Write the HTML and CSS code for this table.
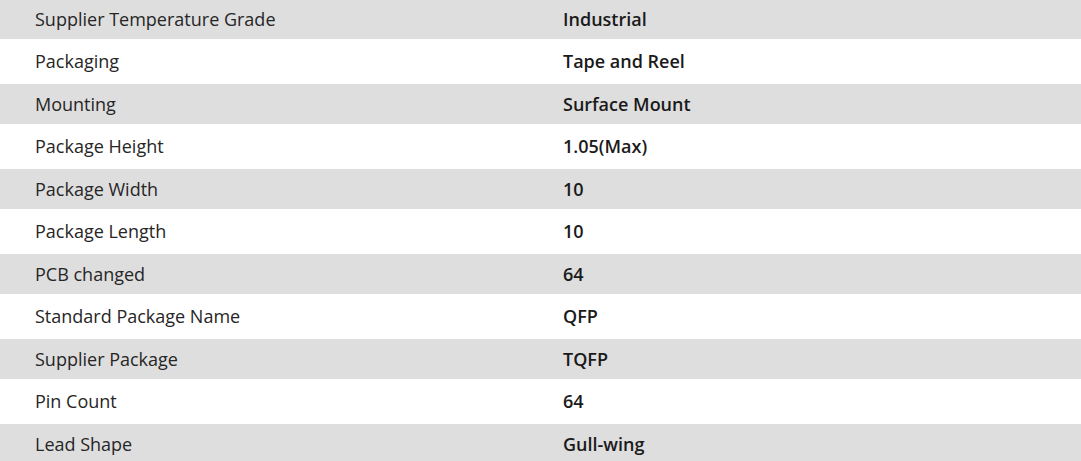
FILE: index.html
```html
<!DOCTYPE html>
<html>
<head>
<meta charset="utf-8">
<link rel="stylesheet" href="styles.css">
</head>
<body>
<div class="specs">
  <div class="row odd"><div class="label">Supplier Temperature Grade</div><div class="value">Industrial</div></div>
  <div class="row even"><div class="label">Packaging</div><div class="value">Tape and Reel</div></div>
  <div class="row odd"><div class="label">Mounting</div><div class="value">Surface Mount</div></div>
  <div class="row even"><div class="label">Package Height</div><div class="value">1.05(Max)</div></div>
  <div class="row odd"><div class="label">Package Width</div><div class="value">10</div></div>
  <div class="row even"><div class="label">Package Length</div><div class="value">10</div></div>
  <div class="row odd"><div class="label">PCB changed</div><div class="value">64</div></div>
  <div class="row even"><div class="label">Standard Package Name</div><div class="value">QFP</div></div>
  <div class="row odd"><div class="label">Supplier Package</div><div class="value">TQFP</div></div>
  <div class="row even"><div class="label">Pin Count</div><div class="value">64</div></div>
  <div class="row odd"><div class="label">Lead Shape</div><div class="value">Gull-wing</div></div>
</div>
</body>
</html>
```
FILE: styles.css
```css
html, body {
  margin: 0;
  padding: 0;
  background: #ffffff;
}
body {
  font-family: "Open Sans", "Noto Sans", sans-serif;
  color: #262626;
  overflow: hidden;
}
.specs {
  display: flex;
  flex-direction: column;
  margin-top: -1px;
}
.row {
  display: grid;
  grid-template-columns: 528px 1fr;
  align-items: center;
  padding-left: 35px;
  line-height: 1;
}
.row.odd {
  background: #dedede;
  height: 40px;
}
.row.even {
  background: #ffffff;
  height: 45px;
}
.label {
  font-size: 18px;
  font-weight: 400;
  padding-bottom: 1px;
}
.value {
  font-size: 18px;
  font-weight: 600;
  color: #1a1a1a;
  padding-bottom: 1px;
}
```
